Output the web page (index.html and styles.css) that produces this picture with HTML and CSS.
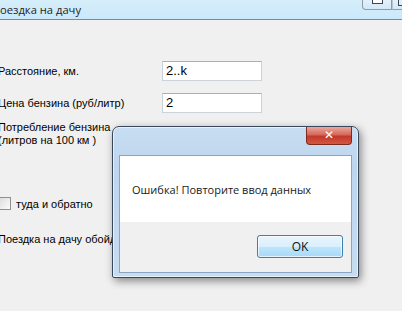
FILE: index.html
```html
<!DOCTYPE html>
<html lang="ru">
<head>
    <meta charset="UTF-8">
    <meta name="viewport" content="width=device-width, initial-scale=1.0">
    <title>Поездка на дачу</title>
    <link rel="stylesheet" href="styles.css">
</head>
<body>
    <div class="window">
        <div class="titlebar">
            <span class="title">оездка на дачу</span>
            <div class="caption-btns">
                <div class="cap-btn min"><span class="min-icon"></span></div>
                <div class="cap-btn max"><span class="max-icon"></span></div>
            </div>
        </div>

        <div class="form">
            <div class="row">
                <span class="label">Расстояние, км.</span>
                <div class="textbox">2..k</div>
            </div>
            <div class="row">
                <span class="label">Цена бензина (руб/литр)</span>
                <div class="textbox">2</div>
            </div>
            <div class="row row-tall">
                <span class="label">Потребление бензина<br>(литров на 100 км )</span>
                <div class="textbox"></div>
            </div>
            <div class="check-row">
                <span class="checkbox"></span>
                <span>туда и обратно</span>
            </div>
            <div class="result">Поездка на дачу обойдется</div>
        </div>

        <div class="dialog">
            <div class="dialog-close">&#10005;</div>
            <div class="dialog-client">
                <div class="dialog-msg">Ошибка! Повторите ввод данных</div>
                <div class="dialog-btns">
                    <div class="ok-btn">OK</div>
                </div>
            </div>
        </div>
    </div>
</body>
</html>
```

FILE: styles.css
```css
body {
    margin: 0;
    padding: 0;
    background: #f0f0f0;
    overflow: hidden;
    font-family: "Liberation Sans", Arial, sans-serif;
    font-size: 11px;
    color: #000;
}
.window {
    position: relative;
    width: 402px;
    height: 311px;
}
.titlebar {
    position: relative;
    height: 19px;
    background: linear-gradient(#d6eefb, #cbe8fa);
    border-bottom: 1px solid #7d8b98;
}
.title {
    display: block;
    padding-top: 2px;
    font-family: "Open Sans", sans-serif;
    font-size: 11.2px;
    line-height: 15px;
    color: #1e1e1e;
}
.caption-btns {
    position: absolute;
    top: 0;
    left: 362px;
    display: flex;
}
.cap-btn {
    height: 9px;
    border: 1px solid #8d9cab;
    border-top: none;
    background: linear-gradient(#e4f1fb, #d3e8f7);
    position: relative;
}
.cap-btn.min {
    width: 28px;
    border-radius: 0 0 0 4px;
}
.cap-btn.max {
    width: 20px;
    border-left: 1px solid #b8c6d3;
}
.min-icon {
    position: absolute;
    left: 9px;
    top: 0;
    width: 9px;
    height: 3px;
    border: 1px solid #3c4650;
    border-top: none;
    background: #fff;
}
.max-icon {
    position: absolute;
    left: 5px;
    top: 0;
    width: 9px;
    height: 5px;
    border: 1px solid #3c4650;
    border-top: none;
}
.form {
    margin-left: -2px;
    padding-top: 41px;
}
.row {
    display: flex;
    align-items: center;
    height: 20px;
    margin-bottom: 12px;
}
.row .label {
    width: 164px;
}
.textbox {
    width: 95px;
    height: 18px;
    background: #fff;
    border: 1px solid #cdd2d9;
    border-top-color: #abadb3;
    padding-left: 3px;
    font-size: 13px;
    line-height: 18px;
    box-sizing: content-box;
}
.row-tall {
    height: 26px;
    align-items: flex-start;
    margin-top: -1px;
}
.row-tall .label {
    line-height: 13px;
    margin-top: -3px;
}
.row-tall .textbox {
    margin-top: 2px;
}
.check-row {
    display: flex;
    align-items: center;
    gap: 5px;
    margin-top: 47px;
    height: 13px;
}
.checkbox {
    width: 11px;
    height: 11px;
    border: 1px solid #8e8f8f;
    background: linear-gradient(135deg, #dcdcdc, #fbfbfb);
    box-sizing: content-box;
}
.result {
    margin-top: 22px;
    line-height: 14px;
}
.dialog {
    position: absolute;
    left: 112px;
    top: 126px;
    width: 247px;
    height: 152px;
    padding: 28px 6px 6px 6px;
    box-sizing: border-box;
    border: 1px solid #38475a;
    border-radius: 7px 7px 2px 2px;
    background: linear-gradient(#c8ddf2, #bdd6ee 40px, #c6dcf1);
    box-shadow: inset 0 0 0 1px rgba(255, 255, 255, 0.6), 2px 3px 9px rgba(0, 0, 0, 0.45);
}
.dialog-close {
    position: absolute;
    left: 193px;
    top: 0;
    width: 46px;
    height: 18px;
    border: 1px solid #7d2a1f;
    border-top: none;
    border-radius: 0 0 4px 4px;
    background: linear-gradient(#e9a99b, #d5685a 45%, #c0392a 55%, #d6563f);
    color: #fff;
    font-family: "DejaVu Sans", sans-serif;
    font-weight: bold;
    font-size: 12px;
    line-height: 17px;
    text-align: center;
    box-sizing: border-box;
}
.dialog-client {
    height: 116px;
    border: 1px solid #8aa4c1;
    background: #f0f0f0;
    display: flex;
    flex-direction: column;
}
.dialog-msg {
    height: 66px;
    background: #fff;
    padding-left: 12px;
    padding-top: 26px;
    box-sizing: border-box;
    font-family: "Open Sans", sans-serif;
    font-size: 11px;
    line-height: 16px;
    color: #1a1a1a;
}
.dialog-btns {
    display: flex;
    justify-content: flex-end;
    padding: 13px 8px 0 0;
}
.ok-btn {
    width: 84px;
    height: 21px;
    border: 1px solid #3c7fb1;
    border-radius: 3px;
    background: linear-gradient(#e8f5fc, #d9effc 50%, #bee6fd 51%, #a7d9f5);
    box-shadow: inset 0 0 0 1px rgba(255, 255, 255, 0.7);
    text-align: center;
    font-family: "Open Sans", sans-serif;
    font-size: 12px;
    line-height: 21px;
    color: #111;
}
```
